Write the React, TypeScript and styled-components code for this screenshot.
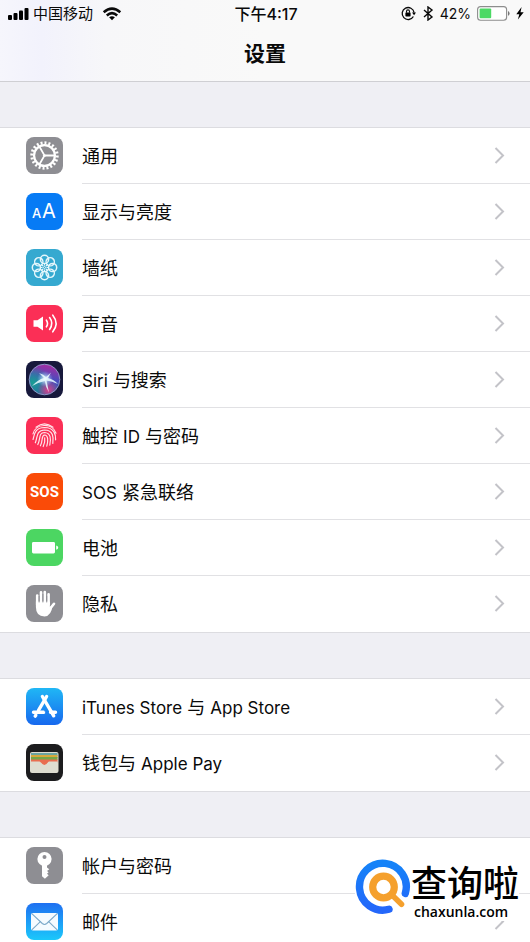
import React from "react";
import styled, { createGlobalStyle } from "styled-components";

const GlobalStyle = createGlobalStyle`
  * { box-sizing: border-box; }
  body {
    margin: 0;
    background: #efeff4;
    color: #0a0a0a;
    font-family: Inter, "Noto Sans CJK SC", sans-serif;
  }
`;

const Page = styled.div`
  height: 100vh;
  overflow: hidden;
`;

const Header = styled.header`
  height: 82px;
  border-bottom: 1px solid #cfcfd3;
  background: linear-gradient(90deg, #f6f6fc 0%, #f2f2fc 8%, #f7f7f9 20%, #f9f9f9 50%);
`;

const StatusBar = styled.div`
  display: grid;
  grid-template-columns: 1fr auto 1fr;
  align-items: center;
  height: 27px;
  padding: 0 6px 0 8px;
  font-size: 15px;
  line-height: 20px;
`;

const StatusGroup = styled.div<{ $end?: boolean }>`
  display: flex;
  align-items: center;
  justify-content: ${(p) => (p.$end ? "flex-end" : "flex-start")};
  gap: ${(p) => (p.$end ? 6 : 4)}px;

  svg { flex: none; }
`;

const Charge = styled.span`
  font-size: 14px;
`;

const Clock = styled.time`
  font-size: 16px;
  font-weight: 500;
`;

const Title = styled.h1`
  margin: 12px 0 0;
  font-size: 21px;
  line-height: 30px;
  font-weight: 600;
  text-align: center;
`;

const Group = styled.ul`
  list-style: none;
  margin: 45px 0 0;
  padding: 0;
  background: #fff;
  border-top: 1px solid #dcdce0;
  border-bottom: 1px solid #dcdce0;
`;

const RowLink = styled.a`
  display: flex;
  align-items: stretch;
  padding-left: 26px;
  color: inherit;
  text-decoration: none;
`;

const IconTile = styled.svg`
  flex: none;
  width: 37px;
  height: 37px;
  margin: 9px 19px 0 0;
  border-radius: 8px;
`;

const RowBody = styled.span`
  display: flex;
  flex: 1;
  align-items: center;
  justify-content: space-between;
  height: 56px;
  padding-right: 25px;
  border-bottom: 1px solid #e1e1e4;

  li:last-child & { border-bottom-color: transparent; }
`;

const Label = styled.span`
  padding-top: 3px;
  font-size: 18px;
  line-height: 26px;
`;

const Latin = styled.span`
  font-size: 17px;
`;

const Watermark = styled.aside`
  position: fixed;
  right: 11px;
  bottom: 21px;
  display: flex;
  align-items: flex-end;
  padding-top: 14px;
  background: #fff;
  color: #000;
`;

const WatermarkText = styled.div`
  display: flex;
  flex-direction: column;
`;

const Brand = styled.span`
  font-family: "Noto Sans CJK SC", sans-serif;
  font-size: 36px;
  line-height: 44px;
  font-weight: 500;
`;

const Domain = styled.span`
  padding-left: 3px;
  font-family: "Open Sans", sans-serif;
  font-size: 14px;
  line-height: 18px;
  font-weight: 600;
`;

const Signal = () => (
  <svg width="21" height="14" viewBox="0 0 21 14" aria-hidden="true">
    <rect x="0" y="8" width="4" height="5" rx="1" />
    <rect x="5.5" y="6" width="4" height="7" rx="1" />
    <rect x="11" y="3.5" width="4" height="9.5" rx="1" />
    <rect x="16.5" y="1" width="4" height="12" rx="1" />
  </svg>
);

const Wifi = () => (
  <svg width="26" height="14" viewBox="0 0 26 14" aria-hidden="true">
    <g transform="translate(1.5 0)">
      <g fill="none" stroke="#0a0a0a" strokeWidth="2.6">
        <path d="M5.2 5.2Q13.5-1.8 21.8 5.2" />
        <path d="M8.3 8.4Q13.5 4 18.7 8.4" />
      </g>
      <path d="M10.6 10.3Q13.5 8 16.4 10.3L13.5 13.2Z" />
    </g>
  </svg>
);

const RotationLock = () => (
  <svg width="15" height="15" viewBox="0 0 15 15" aria-hidden="true">
    <path d="M12.4 10.5A6 6 0 1 1 13.1 6.6" fill="none" stroke="#0a0a0a" strokeWidth="1.3" />
    <path d="M11 6.4h4l-1.9 2.8Z" />
    <rect x="4.4" y="6.4" width="5.2" height="4" rx=".6" />
    <path d="M5.5 6.8V5.4a1.5 1.5 0 0 1 3 0v1.4" fill="none" stroke="#0a0a0a" strokeWidth="1.1" />
  </svg>
);

const Bluetooth = () => (
  <svg width="12" height="15" viewBox="0 0 12 15" aria-hidden="true">
    <path d="M2 4l8 7-4 3V1l4 3-8 7" fill="none" stroke="#0a0a0a" strokeWidth="1.4" />
  </svg>
);

const BatteryStatus = () => (
  <svg width="33" height="15" viewBox="0 0 33 15" aria-hidden="true">
    <rect x=".6" y=".6" width="29" height="13.6" rx="3" fill="#fff" stroke="#8d8d8d" strokeWidth="1.1" />
    <rect x="2.6" y="2.6" width="11.6" height="9.6" rx="1" fill="#4cd964" />
    <path d="M31 5q1.6.6 1.6 2.4T31 9.8Z" fill="#777" />
  </svg>
);

const Bolt = () => (
  <svg width="8" height="13" viewBox="0 0 8 13" aria-hidden="true">
    <path d="M5.6 0L.3 7.3h3L1.9 12.6 7.7 5.2H4.5Z" />
  </svg>
);

const Chevron = () => (
  <svg width="11" height="17" viewBox="0 0 11 17" aria-hidden="true">
    <path d="M1.5 1l7.5 7.5L1.5 16" fill="none" stroke="#c3c3c8" strokeWidth="2" />
  </svg>
);

const Tile = ({ fill, children }: { fill: string; children: React.ReactNode }) => (
  <IconTile viewBox="0 0 37 37" aria-hidden="true">
    <rect width="37" height="37" fill={fill} />
    {children}
  </IconTile>
);

const General = () => (
  <Tile fill="#8e8e93">
    <g transform="translate(18.5 18.5)" fill="none" stroke="#fff">
      <circle r="10.4" strokeWidth="2.2" />
      <circle r="12.7" strokeWidth="3" pathLength="40" strokeDasharray="1 1" />
      <path d="M1 0H10M-.5-.9L-5-8.7M-.5.9L-5 8.7" strokeWidth="1.8" />
    </g>
    <circle cx="18.5" cy="18.5" r="1.6" fill="#fff" />
  </Tile>
);

const Display = () => (
  <Tile fill="#077bf5">
    <g fill="#fff" fontFamily="Inter, sans-serif">
      <text x="6" y="25" fontSize="13" fontWeight="500">A</text>
      <text x="16" y="25" fontSize="20">A</text>
    </g>
  </Tile>
);

const Wallpaper = () => (
  <Tile fill="#35a9d0">
    <g transform="translate(18.5 18.5)" fill="none" stroke="#e4f6fb" strokeWidth="1.5">
      {[0, 45, 90, 135, 180, 225, 270, 315].map((a) => (
        <g key={a} transform={`rotate(${a})`}>
          <circle cy="-8.1" r="4.1" />
          <path d="M0-2L0-4.6" strokeWidth="1.2" />
        </g>
      ))}
      <circle r="1" strokeWidth="1" />
    </g>
  </Tile>
);

const Sound = () => (
  <Tile fill="#fb2f56">
    <path d="M7.5 15.2h4L17 11.5v14l-5.5-3.7h-4Z" fill="#fff" />
    <g fill="none" stroke="#fff" strokeWidth="1.6" strokeLinecap="round">
      <path d="M20.4 15.2q2.3 3.3 0 6.6" />
      <path d="M23.6 12.6q4.4 5.9 0 11.8" />
      <path d="M26.8 10.2q6.6 8.3 0 16.6" />
    </g>
  </Tile>
);

const Siri = () => (
  <Tile fill="#17193c">
    <defs>
      <linearGradient id="siriOrb" x1=".6" y1="0" x2=".4" y2="1">
        <stop offset="0" stopColor="#a82aa0" />
        <stop offset=".45" stopColor="#4b4bbd" />
        <stop offset="1" stopColor="#226b9c" />
      </linearGradient>
      <radialGradient id="siriTeal" cx=".12" cy=".6" r=".55">
        <stop offset="0" stopColor="#189e94" />
        <stop offset="1" stopColor="#189e94" stopOpacity="0" />
      </radialGradient>
      <radialGradient id="siriPink" cx=".62" cy=".85" r=".35">
        <stop offset="0" stopColor="#d8418d" />
        <stop offset="1" stopColor="#d8418d" stopOpacity="0" />
      </radialGradient>
      <radialGradient id="siriGlow">
        <stop offset="0" stopColor="#fff" />
        <stop offset=".35" stopColor="#d8f4ff" stopOpacity=".6" />
        <stop offset="1" stopColor="#7fc4ff" stopOpacity="0" />
      </radialGradient>
    </defs>
    <circle cx="18.5" cy="18.5" r="15.3" fill="url(#siriOrb)" />
    <circle cx="18.5" cy="18.5" r="15.3" fill="url(#siriTeal)" />
    <circle cx="18.5" cy="18.5" r="15.3" fill="url(#siriPink)" />
    <circle cx="18.5" cy="18.5" r="15.3" fill="none" stroke="#8f96c8" strokeWidth="1" />
    <circle cx="19" cy="18" r="8" fill="url(#siriGlow)" />
    <path d="M6 25Q12 18.5 18 17L13 12Q18 13.5 20 16L25 11.5 22 17Q28 18.5 32 23 26 20 20.5 19.5L23 31.5Q19.5 26 18.8 20 12 21.5 6 25Z" fill="#eafcff" opacity=".85" />
  </Tile>
);

const TouchId = () => (
  <Tile fill="#fb2f56">
    <g fill="none" stroke="#ffe3e8" strokeWidth="1.2" strokeLinecap="round">
      <path d="M10 10.2Q18.5 3.4 27 10.2" />
      <path d="M7 16.8C9.5 6.2 26.5 5.4 30 16.2" />
      <path d="M7 22.5C8.4 18.5 8 10.8 18.5 10.5 28.8 10.7 29.8 18 29.6 22.8" />
      <path d="M9.3 25.8C11.8 20.5 9.7 13.4 18.5 13 27.4 13.2 27.7 20.5 26.8 26.4" />
      <path d="M11.8 27.5C15 21 12.2 16 18.5 15.5 25 15.9 25.1 22 23.8 28.2" />
      <path d="M14.4 28.8C17.4 23 15 18.3 18.5 18 22.5 18.3 22.2 24.2 20.8 29.2" />
      <path d="M17.2 29.5Q19.4 25.5 18.7 20.8" />
    </g>
  </Tile>
);

const Sos = () => (
  <Tile fill="#fa4b08">
    <text x="18.5" y="24" textAnchor="middle" fill="#fff" fontFamily="Roboto, sans-serif" fontSize="15" fontWeight="700">SOS</text>
  </Tile>
);

const Battery = () => (
  <Tile fill="#4cd662">
    <rect x="6" y="13" width="23" height="11.5" rx="1.4" fill="#fff" />
    <path d="M30.2 16.6q2 .5 2 2.1t-2 2.1Z" fill="#fff" />
  </Tile>
);

const Privacy = () => (
  <Tile fill="#8e8e93">
    <g fill="none" stroke="#fff" strokeWidth="2.6" strokeLinecap="round">
      <path d="M11.2 20V10.5M15 18V7.3M18.8 18V7M22.6 19V9.3M23.5 24.5L28 18.8" />
    </g>
    <path d="M9.9 16.5H23.9V22L26.5 20Q25.6 31 18.5 31.5 9.9 31.3 9.9 22Z" fill="#fff" />
    <path d="M13.1 17.5V11M16.9 17.5V9M20.7 17.5V11" stroke="#8e8e93" strokeWidth=".8" />
  </Tile>
);

const AppStore = () => (
  <Tile fill="url(#storeBlue)">
    <defs>
      <linearGradient id="storeBlue" x2="0" y2="1">
        <stop stopColor="#20b7f5" />
        <stop offset="1" stopColor="#1768ee" />
      </linearGradient>
    </defs>
    <g fill="none" stroke="#fff" strokeWidth="3.4" strokeLinecap="round">
      <path d="M16.4 8.5L27.7 27.8" />
      <path d="M20.6 8.5L12.5 22.3" />
      <path d="M7.5 24.2H17.8M24.5 24.2H29.5" />
      <path d="M9.8 27.2L9.2 28.1" />
    </g>
    <path d="M18.6 22.5l1.9 3.4" stroke="#1e7df2" strokeWidth=".8" />
  </Tile>
);

const Wallet = () => (
  <Tile fill="#1c1c1e">
    <rect x="4" y="8" width="28.5" height="21" rx="2" fill="#dedcd0" />
    <path d="M5 9h26.5v3H5Z" fill="#6aa3a0" />
    <path d="M5 11h26.5v3H5Z" fill="#d8a83b" />
    <path d="M5 13h26.5v3H5Z" fill="#76a647" />
    <path d="M5 15.4h26.5v3H5Z" fill="#e96d50" />
    <path d="M5 17.6h8.2q1.1 0 1.6 1.3 3.4 4.8 6.9 0 .5-1.3 1.6-1.3h8.2V28H5Z" fill="#dedcd0" />
    <path d="M14.5 17.6h7.8q-3.9 7-7.8 0Z" fill="#e96d50" />
  </Tile>
);

const Key = () => (
  <Tile fill="#8e8e93">
    <circle cx="18.5" cy="12" r="7.1" fill="#fff" />
    <circle cx="18.5" cy="9.9" r="2" fill="#8e8e93" />
    <path d="M16 17h5v3.4l2.3 1.8-2.3 1.7 1.6 1.4-1.6 1.4 1.7 1.5-3.8 3.6-2.9-2.6Z" fill="#fff" />
  </Tile>
);

const Mail = () => (
  <Tile fill="url(#mailBlue)">
    <defs>
      <linearGradient id="mailBlue" x2="0" y2="1">
        <stop stopColor="#1f70f1" />
        <stop offset="1" stopColor="#1bc8fb" />
      </linearGradient>
    </defs>
    <rect x="5" y="10" width="27" height="17.5" rx="1.8" fill="#f5fbff" />
    <g fill="none" stroke="#7ba9c9" strokeWidth="1.1">
      <path d="M5.8 26.8L14.6 18.4M31.2 26.8L22.4 18.4" />
      <path d="M5.8 10.7L16.3 20.5q2.2 1.9 4.4 0L31.2 10.7" />
    </g>
  </Tile>
);

const WatermarkLogo = () => (
  <svg width="56" height="62" viewBox="0 0 56 62" aria-hidden="true">
    <defs>
      <linearGradient id="ringBlue" x2="0" y2="1">
        <stop stopColor="#1583f8" />
        <stop offset="1" stopColor="#2467fa" />
      </linearGradient>
    </defs>
    <path d="M50.3 34.4A23.4 23.4 0 1 0 34 50.3" fill="none" stroke="url(#ringBlue)" strokeWidth="7.4" strokeLinecap="round" />
    <circle cx="28.5" cy="28" r="10.8" fill="none" stroke="#f5a02d" strokeWidth="7.2" />
    <path d="M37 36L46.5 45.2" stroke="#f5a02d" strokeWidth="5.6" strokeLinecap="round" />
  </svg>
);

interface Item {
  icon: React.ComponentType;
  label: React.ReactNode;
}

const groups: Item[][] = [
  [
    { icon: General, label: "通用" },
    { icon: Display, label: "显示与亮度" },
    { icon: Wallpaper, label: "墙纸" },
    { icon: Sound, label: "声音" },
    { icon: Siri, label: <><Latin>Siri</Latin> 与搜索</> },
    { icon: TouchId, label: <>触控 <Latin>ID</Latin> 与密码</> },
    { icon: Sos, label: <><Latin>SOS</Latin> 紧急联络</> },
    { icon: Battery, label: "电池" },
    { icon: Privacy, label: "隐私" },
  ],
  [
    { icon: AppStore, label: <><Latin>iTunes Store</Latin> 与 <Latin>App Store</Latin></> },
    { icon: Wallet, label: <>钱包与 <Latin>Apple Pay</Latin></> },
  ],
  [
    { icon: Key, label: "帐户与密码" },
    { icon: Mail, label: "邮件" },
  ],
];

export default function App() {
  return (
    <Page>
      <GlobalStyle />
      <Header>
        <StatusBar>
          <StatusGroup>
            <Signal />
            <span>中国移动</span>
            <Wifi />
          </StatusGroup>
          <Clock>下午4:17</Clock>
          <StatusGroup $end>
            <RotationLock />
            <Bluetooth />
            <Charge>42%</Charge>
            <BatteryStatus />
            <Bolt />
          </StatusGroup>
        </StatusBar>
        <Title>设置</Title>
      </Header>
      <main>
        {groups.map((items, g) => (
          <Group key={g}>
            {items.map(({ icon: Icon, label }, i) => (
              <li key={i}>
                <RowLink href="#">
                  <Icon />
                  <RowBody>
                    <Label>{label}</Label>
                    <Chevron />
                  </RowBody>
                </RowLink>
              </li>
            ))}
          </Group>
        ))}
      </main>
      <Watermark>
        <WatermarkLogo />
        <WatermarkText>
          <Brand>查询啦</Brand>
          <Domain>chaxunla.com</Domain>
        </WatermarkText>
      </Watermark>
    </Page>
  );
}
